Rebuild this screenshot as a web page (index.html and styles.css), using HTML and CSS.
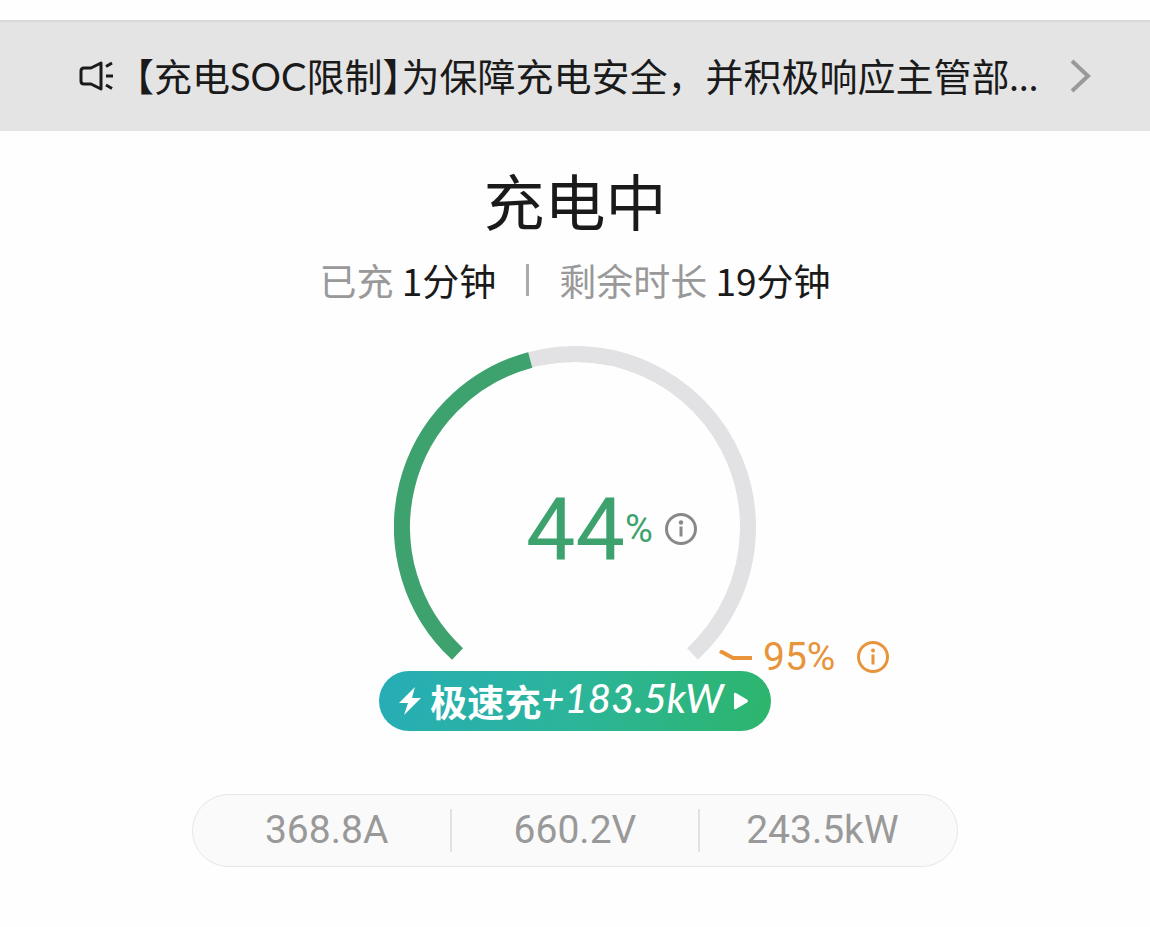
FILE: index.html
```html
<!DOCTYPE html>
<html lang="zh-CN">
<head>
  <meta charset="UTF-8">
  <meta name="viewport" content="width=device-width, initial-scale=1">
  <title>充电中</title>
  <link rel="stylesheet" href="styles.css">
</head>
<body>
  <a class="notice" href="#">
    <svg class="notice-icon" width="38" height="32" viewBox="0 0 38 32" aria-hidden="true">
      <path d="M6 8h7l10-5v26l-10-5H6q-3 0-3-3V11q0-3 3-3z" />
      <path d="M28 6.500l6-3.500M28 16h7M28 25l6 3.500" />
    </svg>
    <span class="notice-text"><span class="notice-tag">【充电SOC限制】</span>为保障充电安全&#xFF0C;并积极响应主管部…</span>
    <svg class="notice-arrow" width="22" height="34" viewBox="0 0 22 34" aria-hidden="true">
      <path d="M2 2l16 15L2 32" />
    </svg>
  </a>

  <main class="charging">
    <h1>充电中</h1>

    <div class="times">
      <p>已充 <strong>1分钟</strong></p>
      <span class="times-line"></span>
      <p>剩余时长 <strong>19分钟</strong></p>
    </div>

    <section class="gauge-row">
      <div class="gauge">
        <svg class="gauge-ring" width="362" height="325" viewBox="0 0 362 325" aria-hidden="true">
          <path class="ring-track" d="M63.500 308A173 173 0 1 1 298.500 308" />
          <path class="ring-value" d="M63.500 308A173 173 0 0 1 136.200 13.900" />
        </svg>
        <div class="gauge-label">
          <span class="percent">44</span>
          <span class="unit">%</span>
          <button class="info" aria-label="电量说明">
            <svg width="32" height="32" viewBox="0 0 32 32">
              <circle cx="16" cy="16" r="14.500" />
              <path d="M16 13.500v10" />
              <circle class="dot" cx="16" cy="9.500" r="2.200" />
            </svg>
          </button>
        </div>
      </div>

      <div class="limit">
        <svg width="34" height="14" viewBox="0 0 34 14" aria-hidden="true">
          <path d="M1 1l13 7h19" />
        </svg>
        <span>95%</span>
        <button class="info" aria-label="充电上限说明">
          <svg width="32" height="32" viewBox="0 0 32 32">
            <circle cx="16" cy="16" r="14.500" />
            <path d="M16 13.500v10" />
            <circle class="dot" cx="16" cy="9.500" r="2" />
          </svg>
        </button>
      </div>
    </section>

    <button class="boost">
      <svg width="22" height="28" viewBox="0 0 22 28" aria-hidden="true">
        <path d="M16 0L0 16h9L5 28 22 11h-9z" />
      </svg>
      <span class="boost-text"><b>极速充</b><i>+183.5kW</i></span>
      <svg width="16" height="18" viewBox="0 0 16 18" aria-hidden="true">
        <path d="M1 2Q1 0 3 1l11 6.500q2 1.500 0 3L3 17q-2 1-2-1z" />
      </svg>
    </button>

    <ul class="stats">
      <li>368.8A</li>
      <li>660.2V</li>
      <li>243.5kW</li>
    </ul>
  </main>
</body>
</html>
```
FILE: styles.css
```css
:root {
  --green: #3da26e;
  --orange: #e8943a;
  --text: #1a1a1a;
  --muted: #999;
  --track: #e2e2e4;
  --line: #e6e6e6;
}

* {
  box-sizing: border-box;
}

body {
  margin: 0;
  padding-top: 20px;
  background: #fefefe;
  color: var(--text);
  font-family: Roboto, "Noto Sans CJK SC", sans-serif;
}

h1, p, ul {
  margin: 0;
  padding: 0;
}

button {
  border: none;
  background: none;
  padding: 0;
  color: inherit;
  font: inherit;
  cursor: pointer;
}

svg {
  display: block;
  flex: none;
  fill: none;
  stroke: currentColor;
}

/* notice bar */
.notice {
  display: flex;
  align-items: center;
  padding: 26px 58px 27px 78px;
  background: #e4e4e4;
  border-top: 2px solid #d9d9d9;
  color: var(--text);
  text-decoration: none;
}

.notice-icon {
  stroke-width: 3;
  stroke-linejoin: round;
}

.notice-text {
  flex: 1;
  padding-left: 19px;
  font-family: Lato, "Noto Sans CJK SC", sans-serif;
  font-size: 38px;
  line-height: 56px;
  white-space: nowrap;
  overflow: hidden;
}

.notice-tag {
  font-feature-settings: "halt";
}

.notice-arrow {
  color: var(--muted);
  stroke-width: 4;
}

/* charging state */
.charging {
  display: flex;
  flex-direction: column;
  align-items: center;
}

h1 {
  margin-top: 25px;
  font-family: "Noto Sans CJK SC", sans-serif;
  font-size: 61px;
  font-weight: 400;
  line-height: 88px;
}

.times {
  display: flex;
  align-items: center;
  gap: 30px;
  margin-top: 8px;
  color: var(--muted);
  font-family: "Noto Sans CJK SC", sans-serif;
  font-size: 37px;
  line-height: 56px;
}

.times strong {
  color: var(--text);
  font-weight: 400;
}

.times-line {
  width: 3px;
  height: 32px;
  background: #aaa;
}

.gauge-row {
  display: grid;
  grid-template-columns: 1fr auto 1fr;
  align-self: stretch;
  margin-top: 38px;
}

.gauge {
  display: grid;
  grid-column: 2;
}

.gauge-ring,
.gauge-label {
  grid-area: 1 / 1;
}

.gauge-ring {
  stroke-width: 16;
}

.ring-track {
  stroke: var(--track);
}

.ring-value {
  stroke: var(--green);
}

.gauge-label {
  display: flex;
  align-items: center;
  align-self: center;
  padding: 40px 0 0 132px;
  color: var(--green);
}

.percent {
  font-size: 88px;
  line-height: 88px;
}

.unit {
  font-size: 38px;
  line-height: 56px;
}

.info svg {
  stroke-width: 3;
}

.info .dot {
  fill: currentColor;
  stroke: none;
}

.gauge-label .info {
  margin-left: 12px;
  color: #888;
}

.limit {
  display: flex;
  align-items: center;
  align-self: end;
  margin: 0 0 -2px -37px;
  color: var(--orange);
  font-size: 39px;
  line-height: 30px;
}

.limit > svg {
  stroke-width: 4;
}

.limit span {
  margin: 0 22px 0 10px;
}

/* boost pill */
.boost {
  display: flex;
  align-items: center;
  gap: 9px;
  height: 60px;
  padding: 0 22px 0 20px;
  border-radius: 30px;
  background: linear-gradient(100deg, #26adb6, #2cb59a 50%, #2db56c);
  color: #fff;
}

.boost svg {
  fill: currentColor;
  stroke: none;
}

.boost-text {
  display: flex;
  align-items: flex-start;
}

.boost b {
  font-family: "Noto Sans CJK SC", sans-serif;
  font-size: 37px;
  font-weight: 700;
  line-height: 60px;
}

.boost i {
  font-family: Lato, sans-serif;
  font-size: 40px;
  font-weight: 500;
  line-height: 54px;
}

/* live values */
.stats {
  display: grid;
  grid-template-columns: repeat(3, 1fr);
  width: calc(100% - 384px);
  margin-top: 63px;
  padding: 14px 12px 14px 10px;
  border: 1px solid var(--line);
  border-radius: 37px;
  background: #fafafa;
  color: var(--muted);
  font-size: 39px;
  line-height: 43px;
  list-style: none;
  text-align: center;
}

.stats li + li {
  border-left: 2px solid #e2e2e2;
}
```
